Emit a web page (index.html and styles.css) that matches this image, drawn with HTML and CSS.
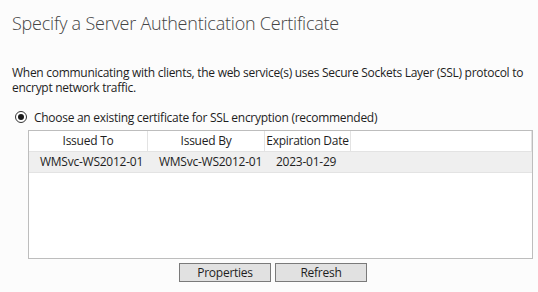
FILE: index.html
```html
<!DOCTYPE html>
<html>
<head>
<meta charset="utf-8">
<link rel="stylesheet" href="styles.css">
</head>
<body>
<div class="page">
  <h1 class="title">Specify a Server Authentication Certificate</h1>
  <p class="desc">When communicating with clients, the web service(s) uses Secure Sockets Layer (SSL) protocol to encrypt network traffic.</p>
  <label class="radio-row">
    <span class="radio"><span class="dot"></span></span>
    <span>Choose an existing certificate for SSL encryption (recommended)</span>
  </label>
  <div class="list">
    <div class="head">
      <div class="hcell c1">Issued To</div>
      <div class="hcell c2">Issued By</div>
      <div class="hcell c3">Expiration Date</div>
      <div class="hcell fill"></div>
    </div>
    <div class="row sel">
      <div class="cell c1">WMSvc-WS2012-01</div>
      <div class="cell c2">WMSvc-WS2012-01</div>
      <div class="cell c3">2023-01-29</div>
      <div class="cell fill"></div>
    </div>
  </div>
  <div class="buttons">
    <button class="btn">Properties</button>
    <button class="btn">Refresh</button>
  </div>
</div>
</body>
</html>
```
FILE: styles.css
```css
html, body {
  margin: 0;
  padding: 0;
  background: #fcfcfc;
}
body {
  font-family: "Open Sans", "Noto Sans", sans-serif;
  font-size: 12px;
  color: #1e1e1e;
}
.page {
  padding: 0 0 0 12px;
  width: 526px;
}
.title {
  margin: 0;
  padding-top: 11px;
  font-size: 18px;
  font-weight: 300;
  color: #444;
  line-height: 24px;
  letter-spacing: -0.22px;
}
.desc {
  margin: 0;
  padding-top: 30px;
  line-height: 15px;
  width: 520px;
  letter-spacing: -0.28px;
}
.radio-row {
  display: flex;
  align-items: center;
  margin-top: 14px;
  height: 16px;
  letter-spacing: -0.28px;
}
.radio {
  width: 10px;
  height: 10px;
  border: 1px solid #333;
  border-radius: 50%;
  margin-left: 3px;
  margin-right: 7px;
  display: flex;
  align-items: center;
  justify-content: center;
  background: #fff;
}
.dot {
  width: 6px;
  height: 6px;
  border-radius: 50%;
  background: #1a1a1a;
}
.list {
  margin-left: 16px;
  margin-top: 5px;
  width: 503px;
  height: 127px;
  border: 1px solid #bdbdbd;
  background: #fff;
  letter-spacing: -0.25px;
}
.head, .row {
  display: flex;
  height: 20px;
}
.head {
  border-bottom: 1px solid #e3e3e3;
}
.hcell {
  border-right: 1px solid #e3e3e3;
  text-align: center;
  line-height: 20px;
  box-sizing: border-box;
}
.c1 { width: 119px; }
.c2 { width: 117px; }
.c3 { width: 86px; }
.fill { flex: 1; }
.hcell.fill { border-right: 1px solid #e3e3e3; }
.row.sel {
  background: #efefef;
  border-bottom: 1px solid #e3e3e3;
}
.cell {
  line-height: 20px;
  padding-left: 11px;
  box-sizing: border-box;
  white-space: nowrap;
}
.buttons {
  display: flex;
  gap: 4px;
  margin-top: 4px;
  margin-left: 167px;
}
.btn {
  width: 92px;
  height: 19px;
  padding: 0;
  font-family: inherit;
  font-size: 12px;
  letter-spacing: -0.25px;
  color: #1e1e1e;
  background: #e1e1e1;
  border: 1px solid #7a7a7a;
  border-radius: 0;
  line-height: 17px;
}
```
